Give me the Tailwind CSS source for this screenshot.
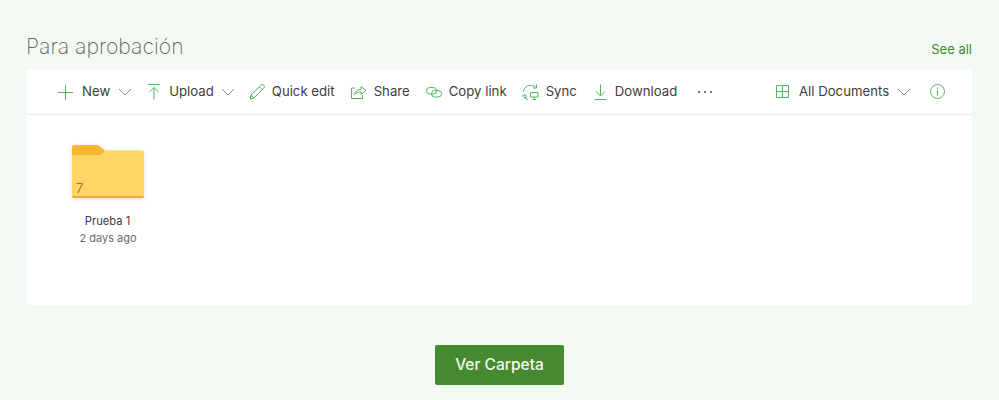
<!DOCTYPE html>
<html lang="es">
<head>
    <meta charset="UTF-8">
    <title>Para aprobación</title>
    <script src="https://cdn.jsdelivr.net/npm/@tailwindcss/browser@4"></script>
</head>
<body class="h-[400px] overflow-hidden bg-[#f3faf3] font-['Inter',sans-serif]">
    <div class="px-[27px] pt-[33px]">
        <div class="flex items-start justify-between h-[37px]">
            <h1 class="text-[21.200px] leading-[26px] font-extralight text-[#666] -ml-[1px]">Para aprobación</h1>
            <a class="text-[13px] leading-[16px] text-[#3f8a2f] mt-[8px]">See all</a>
        </div>

        <div class="bg-white h-[235px]">
            <!-- command bar -->
            <div class="flex items-center h-[45px] border-b border-[#ececec] text-[13.200px] text-[#3d3d3d] pl-[31px]">
                <svg class="w-[15px] h-[15px] mr-[9px]" viewBox="0 0 15 15" fill="none" stroke="#55b560"><path d="M7.500 0v15M0 7.500h15"/></svg>
                <span class="mr-[8px]">New</span>
                <svg class="w-[14px] h-[8px] mr-[15px]" viewBox="0 0 14 8" fill="none" stroke="#8a8a8a"><path d="M1 1l6 6 6-6"/></svg>

                <svg class="w-[14px] h-[16px] mr-[8px]" viewBox="0 0 14 16" fill="none" stroke="#55b560"><path d="M1 .5h12M7 15.500V3.500M2.500 8L7 3.500 11.500 8"/></svg>
                <span class="mr-[7px]">Upload</span>
                <svg class="w-[14px] h-[8px] mr-[14px]" viewBox="0 0 14 8" fill="none" stroke="#8a8a8a"><path d="M1 1l6 6 6-6"/></svg>

                <svg class="w-[16px] h-[16px] mr-[7px]" viewBox="0 0 16 16" fill="none" stroke="#55b560"><path d="M1 15l1-4L12 1.200a1.500 1.500 0 0 1 2.800 2.800L5 14zM2 11l3 3M10.500 3l2.500 2.500"/></svg>
                <span class="mr-[16px]">Quick edit</span>

                <svg class="w-[16px] h-[14px] mr-[7px]" viewBox="0 0 16 14" fill="none" stroke="#55b560"><path d="M4 3H.5v10.500h11V10M3.500 9.500C4 6 7 4.500 10 4.500V1.500l5 4-5 4V7C8 7 5.500 7.500 3.500 9.500z"/></svg>
                <span class="mr-[16px]">Share</span>

                <svg class="w-[16px] h-[11px] mr-[7px]" viewBox="0 0 16 11" fill="none" stroke="#55b560"><rect x=".5" y=".5" width="10" height="6.500" rx="3.250"/><rect x="5.500" y="3.500" width="10" height="6.500" rx="3.250"/></svg>
                <span class="mr-[15px]">Copy link</span>

                <svg class="w-[17px] h-[16px] mr-[7px]" viewBox="0 0 17 16" fill="none" stroke="#55b560"><path d="M1.500 8C1.500 3 8-1 13.500 3M14.500.5v3.500H11M.5 11h3.500v3.500M1 11.500c1 2 2.500 3.500 5 4M8.500 8.500h7.500v4.500H8.500zM12.200 13v2.500M10.500 15.500h3.500"/></svg>
                <span class="mr-[17px]">Sync</span>

                <svg class="w-[13px] h-[16px] mr-[8px]" viewBox="0 0 13 16" fill="none" stroke="#55b560"><path d="M6.500.5v11M2 7.500L6.500 12 11 7.500M.5 15.500h12"/></svg>
                <span class="mr-[21px]">Download</span>

                <span class="flex gap-[4px]">
                    <i class="block w-[2px] h-[2px] bg-[#777]"></i><i class="block w-[2px] h-[2px] bg-[#777]"></i><i class="block w-[2px] h-[2px] bg-[#777]"></i>
                </span>

                <div class="ml-auto flex items-center pr-[27px]">
                    <svg class="w-[13px] h-[13px] mr-[10px]" viewBox="0 0 13 13" fill="none" stroke="#55b560"><path d="M.5.5h12v12H.5zM6.500.5v12M.5 6.500h12"/></svg>
                    <span class="w-[90px] mr-[8px] whitespace-nowrap">All Documents</span>
                    <svg class="w-[14px] h-[8px] mr-[19px]" viewBox="0 0 14 8" fill="none" stroke="#8a8a8a"><path d="M1 1l6 6 6-6"/></svg>
                    <svg class="w-[15px] h-[15px]" viewBox="0 0 15 15" fill="none" stroke="#55b560"><circle cx="7.500" cy="7.500" r="7"/><path d="M7.500 6.500v5M7.500 3.500v1.500"/></svg>
                </div>
            </div>

            <!-- folder tile -->
            <div class="w-[100px] ml-[31px] mt-[30px] flex flex-col items-center">
                <div class="relative w-[72px] h-[53px] drop-shadow-[0_1px_2px_rgba(0,0,0,0.12)]">
                    <svg class="w-[72px] h-[53px]" viewBox="0 0 72 53">
                        <path d="M2 0h24l7 5.500-4 5H0V2a2 2 0 0 1 2-2z" fill="#f5b730"/>
                        <path d="M0 12a2 2 0 0 1 2-2h27l4.500-4.500H70a2 2 0 0 1 2 2V51a2 2 0 0 1-2 2H2a2 2 0 0 1-2-2z" fill="#fdd766"/>
                        <path d="M0 51h72a2 2 0 0 1-2 2H2a2 2 0 0 1-2-2z" fill="#f5a83c"/>
                    </svg>
                    <span class="absolute left-[4px] bottom-[3px] text-[13px] leading-[14px] text-[#d2692a]">7</span>
                </div>
                <div class="mt-[15px] -ml-[1px] text-[11.200px] leading-[16px] text-[#3d3d3d]">Prueba 1</div>
                <div class="mt-[1px] text-[11px] leading-[16px] text-[#6b6b6b]">2 days ago</div>
            </div>
        </div>

        <div class="flex justify-center mt-[40px]">
            <button class="w-[129px] h-[40px] rounded-[2px] bg-[#468a2f] text-[#f2f8f0] text-[15.500px] font-medium">Ver Carpeta</button>
        </div>
    </div>
</body>
</html>
